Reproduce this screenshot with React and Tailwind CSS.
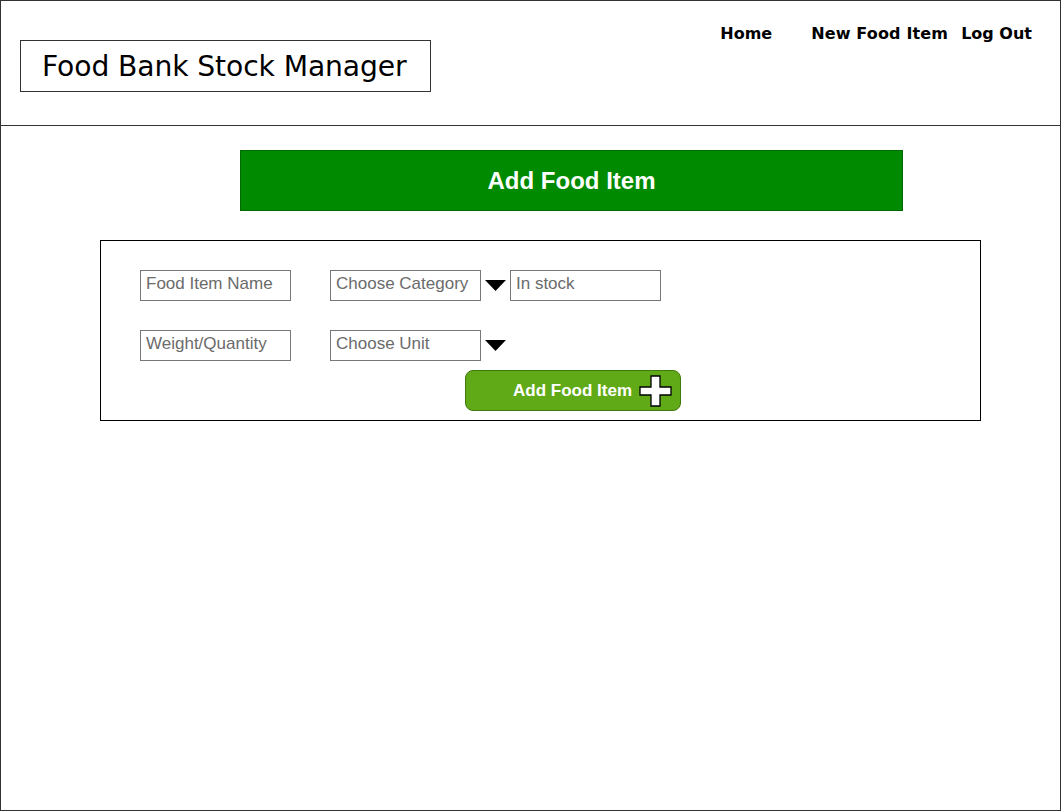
import React from "react";

function Caret() {
  return (
    <svg width="21" height="11" viewBox="0 0 21 11" className="shrink-0">
      <polygon points="0,0 21,0 10.5,11" fill="#000" />
    </svg>
  );
}

function PlusIcon() {
  return (
    <svg width="33" height="32" viewBox="0 0 33 32">
      <path
        d="M12 1 H21 V12 H32 V20 H21 V31 H12 V20 H1 V12 H12 Z"
        fill="#fff"
        stroke="#000"
        strokeWidth="1.3"
      />
    </svg>
  );
}

function Field({ placeholder }) {
  return (
    <input
      placeholder={placeholder}
      className="w-[151px] h-[31px] shrink-0 border border-[#777] bg-white pl-[5px] pb-[4px] text-[17px] text-[#666] placeholder:text-[#6b6b6b] font-['Liberation_Sans',Arial,sans-serif] outline-none"
    />
  );
}

export default function App() {
  const links = ["Home", "New Food Item", "Log Out"];

  return (
    <div className="w-[1061px] h-[811px] bg-white border border-[#333] flex flex-col font-['DejaVu_Sans',sans-serif]">
      {/* header */}
      <div className="h-[125px] shrink-0 border-b border-[#333] flex justify-between">
        <div className="ml-[19px] mt-[39px] h-[52px] w-[411px] border border-[#333] flex items-center pl-[21px] pt-[2px] text-[28.2px] text-black tracking-[-0.1px]">
          Food Bank Stock Manager
        </div>
        <nav className="flex mt-[22px] mr-[28px] text-[16px] font-bold text-black h-[22px] items-center">
          {links.map((l, i) => (
            <span key={l} className={i === 1 ? "ml-[39px] tracking-[0.15px]" : i === 2 ? "ml-[13px]" : ""}>
              {l}
            </span>
          ))}
        </nav>
      </div>

      {/* main */}
      <div className="flex flex-col">
        <div className="ml-[239px] mt-[24px] w-[663px] h-[61px] bg-[#008a00] border border-[#006a00] flex items-center justify-center text-white text-[24px] font-bold font-['Liberation_Sans',Arial,sans-serif]">
          Add Food Item
        </div>

        <div className="ml-[99px] mt-[29px] w-[881px] h-[181px] border border-black pl-[39px] pt-[29px] flex flex-col">
          <div className="flex items-center">
            <Field placeholder="Food Item Name" />
            <div className="ml-[39px] flex items-center gap-[4px]">
              <Field placeholder="Choose Category" />
              <Caret />
              <Field placeholder="In stock" />
            </div>
          </div>
          <div className="flex items-center mt-[29px]">
            <Field placeholder="Weight/Quantity" />
            <div className="ml-[39px] flex items-center gap-[4px]">
              <Field placeholder="Choose Unit" />
              <Caret />
            </div>
          </div>
          <button className="ml-[325px] mt-[9px] w-[216px] h-[41px] rounded-[8px] bg-[#60a917] border border-[#3f7a0c] flex items-center justify-end pr-[8px] gap-[7px] text-white text-[17px] font-bold font-['Liberation_Sans',Arial,sans-serif]">
            <span>Add Food Item</span>
            <PlusIcon />
          </button>
        </div>
      </div>
    </div>
  );
}
